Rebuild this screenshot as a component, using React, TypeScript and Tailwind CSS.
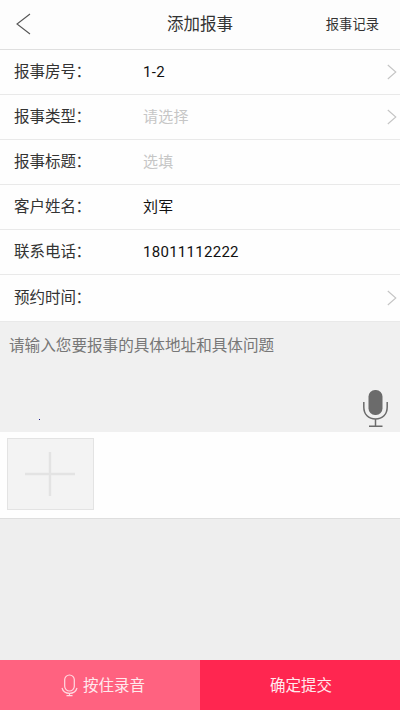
import { clsx } from "clsx";

interface Field {
  label: string;
  value?: string;
  placeholder?: string;
  arrow?: boolean;
}

const fields: Field[] = [
  { label: "报事房号", value: "1-2", arrow: true },
  { label: "报事类型", placeholder: "请选择", arrow: true },
  { label: "报事标题", placeholder: "选填" },
  { label: "客户姓名", value: "刘军" },
  { label: "联系电话", value: "18011112222" },
  { label: "预约时间", arrow: true },
];

function ArrowRight() {
  return (
    <svg width="10" height="16" viewBox="0 0 10 16" fill="none" stroke="#c4c4c4" strokeWidth="1.1">
      <path d="M0.8 1L8.8 8L0.8 15" />
    </svg>
  );
}

function FieldRow({ label, value, placeholder, arrow }: Field) {
  return (
    <div className="flex h-[45px] items-center border-b border-[#e9e9e9] pl-[14px] pr-[3px] last:h-[47px]">
      <span className="flex w-[129px] pt-px text-[15.5px] text-[#333]">
        {label}
        <span className="-ml-[0.5px]">：</span>
      </span>
      <span className={clsx("flex-1 text-[15px] tracking-[0.28px]", value ? "text-[#111]" : "text-[#c6c6c6]")}>
        {value ?? placeholder}
      </span>
      {arrow && <ArrowRight />}
    </div>
  );
}

export default function App() {
  return (
    <div className="flex h-[710px] w-[400px] flex-col overflow-hidden bg-[#eee] font-['Roboto','Noto_Sans_CJK_SC',sans-serif] leading-none">
      <header className="grid h-[50px] grid-cols-[1fr_auto_1fr] items-center border-b border-[#dfdfdf] bg-[#fdfdfd] pl-4 pr-[21px] text-[#333]">
        <svg className="mb-[2px]" width="15" height="22" viewBox="0 0 15 22" fill="none" stroke="#555" strokeWidth="1.1">
          <path d="M14 1L1 11L14 21" />
        </svg>
        <h1 className="pl-[5px] pt-[2px] text-[16.5px]">添加报事</h1>
        <button className="justify-self-end text-[13.3px]">报事记录</button>
      </header>

      <div className="bg-[#fefefe]">
        {fields.map((f) => (
          <FieldRow key={f.label} {...f} />
        ))}
      </div>

      {/* Description */}
      <div className="relative h-[110px] bg-[#f0f0f0] px-[9px] pt-[17px]">
        <p className="text-[15.6px] text-[#777]">请输入您要报事的具体地址和具体问题</p>
        <span className="absolute left-[39px] top-[97px] size-px bg-[#1a1a8c]" />
        <svg className="absolute left-[362px] top-[67px]" width="27" height="40" viewBox="0 0 27 40" fill="none" stroke="#6b6b6b" strokeWidth="1.5">
          <rect x="6.5" y="1" width="14" height="25" rx="6.5" fill="#6b6b6b" stroke="none" />
          <path d="M1.8 13V18C1.8 25.5 6.5 30 13.5 30S25.2 25.5 25.2 18V13M13.5 30V37.2M7 37.2H20.5" />
        </svg>
      </div>

      {/* Photos */}
      <div className="h-[87px] border-b border-[#dedede] bg-[#fefefe] pl-[7px] pt-[6px]">
        <div className="flex h-[72px] w-[87px] items-center justify-center border border-[#e3e3e3] bg-[#f3f3f3] pr-px">
          <svg width="50" height="44" viewBox="0 0 50 44" stroke="#e3e3e3" strokeWidth="2.4">
            <path d="M0 22H50M25 0V44" />
          </svg>
        </div>
      </div>

      <footer className="mt-auto grid h-[50px] grid-cols-2 text-[15.5px] text-[#ffe9ed]">
        <button className="flex items-center justify-center gap-[5px] bg-[#ff6280] pl-[6px]">
          <svg width="17" height="23" viewBox="0 0 17 23" fill="none" stroke="#ffdbe2" strokeWidth="1.2">
            <rect x="3.7" y="1" width="9.6" height="16" rx="4.8" />
            <path d="M1 14C2 17.5 4.5 19.3 8.5 19.3S15 17.5 16 14M8.5 19.3V21.7M5.5 21.7H11.5" />
          </svg>
          <span className="pt-[3px]">按住录音</span>
        </button>
        <button className="bg-[#ff2650] pl-[2px] pt-[3px]">确定提交</button>
      </footer>
    </div>
  );
}
